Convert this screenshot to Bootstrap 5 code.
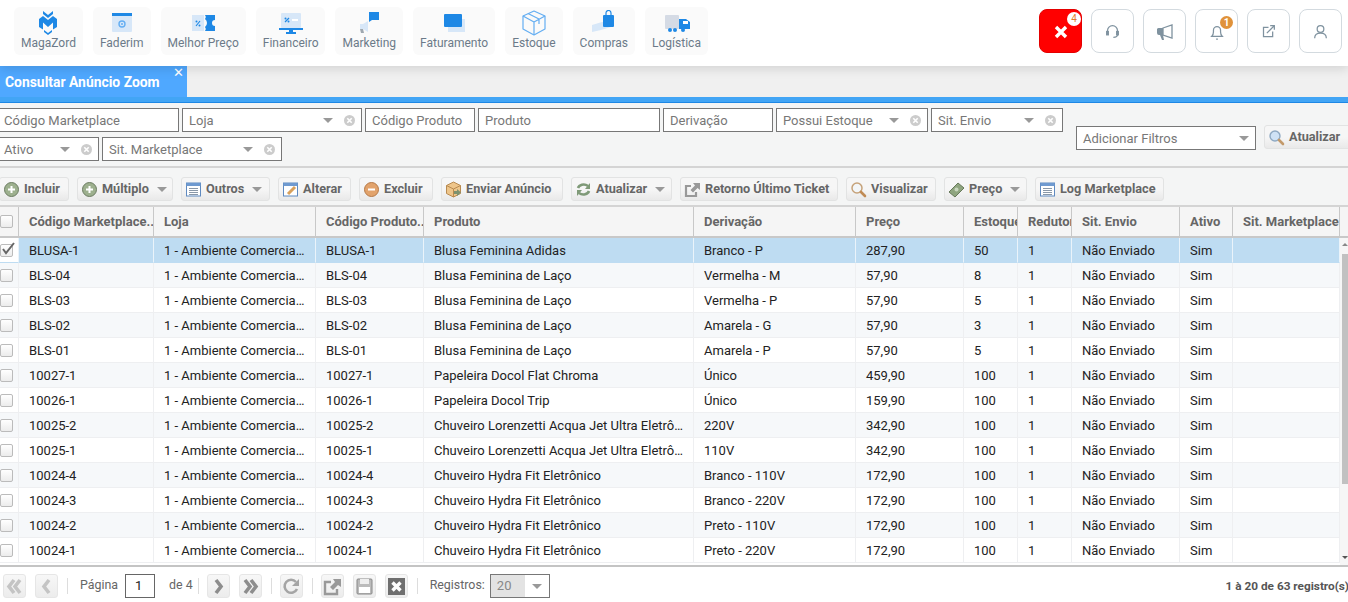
<!DOCTYPE html>
<html lang="pt-BR">
<head>
<meta charset="UTF-8">
<meta name="viewport" content="width=device-width, initial-scale=1.0">
<link href="https://cdn.jsdelivr.net/npm/bootstrap@5.3.0/dist/css/bootstrap.min.css" rel="stylesheet">
<script src="https://cdn.jsdelivr.net/npm/bootstrap@5.3.0/dist/js/bootstrap.bundle.min.js"></script>
<title>Consultar Anúncio Zoom</title>
<style>
html, body { height: 100%; overflow: hidden; }
body { font-family: Roboto, "Liberation Sans", sans-serif; font-size: 13px; background: #fff; color: #222; }

/* top menu */
.topbar { height: 66px; padding: 7px 6px 0 14px; position: relative; z-index: 2; box-shadow: 0 3px 10px rgba(0,0,0,.12); background: #fff; }
.mods { column-gap: 10px; }
.mod { height: 48px; background: #fafafa; border-radius: 6px; padding: 0 7px; color: #6c7a89; font-size: 12px; line-height: 14px; text-decoration: none; }
.mod svg { height: 26px; width: 30px; margin-top: 3px; }
.tools { column-gap: 9px; }
.tool { width: 43px; height: 44px; margin-top: 2px; background: #fff; border: 1px solid #d3dadf; border-radius: 8px; position: relative; padding: 0; }
.tool.alert-red { background: #f00; border-color: #e40000; }
.pip { position: absolute; top: 2px; right: 0; width: 14px; height: 14px; border-radius: 50%; background: #fff; color: #e57a2c; font-size: 10px; line-height: 14px; text-align: center; }
.pip.orange { background: #e0923a; color: #fff; font-weight: 700; width: 13px; height: 13px; line-height: 13px; top: 6px; right: 4px; }

/* tab strip */
.tabstrip { height: 31px; background: #f0f0f0; }
.tabsel { width: 187px; height: 31px; background: #4fa8ff; color: #fff; font-weight: 700; font-size: 13.9px; padding: 6px 0 0 5px; position: relative; }
.tabx { position: absolute; top: -1px; right: 3px; font-size: 13px; font-weight: 400; line-height: 16px; }
.band { height: 6px; background: #42a5f5; border-bottom: 1px solid #1e88e5; }

/* filters */
.filters { height: 65px; background: #f4f5f5; border-bottom: 2px solid #d4d4d4; }
.fwrap { width: 1070px; margin-left: -3px; padding-top: 5px; gap: 5px 3px; }
.fbox { height: 24px; background: #fff; border: 1px solid #777; color: #777; font-size: 13px; line-height: 22px; padding: 1px 6px 0; }
.fbox .caret { margin-left: auto; }
.caret { width: 0; height: 0; border-left: 5px solid transparent; border-right: 5px solid transparent; border-top: 5px solid #999; }
.clr { width: 11px; height: 11px; margin-left: 11px; flex: none; }
.w-a { width: 182px; padding-left: 6px; } .w-b { width: 180px; } .w-c { width: 110px; } .w-d { width: 182px; }
.w-e { width: 110px; } .w-f { width: 152px; } .w-g { width: 132px; } .w-h { width: 102px; padding-left: 6px; } .w-i { width: 180px; }
.addf { position: absolute; left: 1076px; top: 23px; width: 180px; }
.atual { position: absolute; left: 1264px; top: 22px; width: 100px; }

/* toolbar */
.actions { height: 39px; background: #f4f5f5; border-bottom: 2px solid #d4d4d4; padding: 9px 0 0 0; gap: 8px; margin-left: -1px; }
.act { height: 24px; padding: 0 6px 0 3px; border: 1px solid #e2e3e3; border-radius: 3px; font-size: 12.7px; font-weight: 700; color: #666; line-height: 22px; gap: 4px; background: linear-gradient(#f6f6f6 0, #f6f6f6 50%, #e9e9e9 100%); white-space: nowrap; }
.act svg { width: 17px; height: 17px; flex: none; }
.act .caret { margin-left: 4px; margin-right: 2px; }

/* grid */
.gridwrap { height: 360px; overflow: hidden; position: relative; background: #fff; border-bottom: 2px solid #c4c4c4; }
.gridtable { table-layout: fixed; width: 1340px; margin: 0; font-size: 13px; border-collapse: separate; border-spacing: 0; }
.gridtable th { height: 31px; padding: 0 0 0 10px; background: #f5f5f5; color: #666; font-weight: 700; white-space: nowrap; overflow: hidden; border-bottom: 2px solid #c8c8c8; border-right: 1px solid #c8c8c8; vertical-align: middle; }
.gridtable td { height: 25px; padding: 1px 10px 0; color: #222; white-space: nowrap; overflow: hidden; text-overflow: ellipsis; vertical-align: middle; background: #fff; border-bottom: 1px solid #eeeff1; border-right: 1px solid #eeeff1; box-shadow: none; }
.gridtable tbody tr:nth-child(even) td { background: #f6f8fa; }
.gridtable tbody tr.picked td { background: #bedcf2; border-right-color: #eaf3fa; border-bottom-color: #bedcf2; }
.gridtable tbody tr.picked td.cb { background: #fff; }
.gridtable .cb { padding: 0; }
.headfill { position: absolute; left: 1340px; top: 0; width: 8px; height: 31px; background: #f5f5f5; border-bottom: 2px solid #c8c8c8; }
.chk { display: block; width: 13px; height: 13px; margin-left: 0; border: 1px solid #bbb; border-radius: 2px; background: linear-gradient(#fff, #ececec); position: relative; }
.chk svg { position: absolute; left: -1px; top: -4px; width: 16px; height: 16px; }
.sbar { position: absolute; left: 1340px; top: 31px; bottom: 0; width: 8px; background: #f6f6f6; }
.sthumb { position: absolute; left: 2px; right: 0; top: 16px; height: 230px; background: #c1c1c1; }
.sup, .sdown { position: absolute; left: 2px; width: 0; height: 0; border-left: 3px solid transparent; border-right: 3px solid transparent; }
.sup { top: 5px; border-bottom: 3px solid #888; }
.sdown { bottom: 6px; border-top: 3px solid #555; }

/* pager */
.pager { height: 35px; padding: 7px 0 0 3px; background: #fff; color: #666; font-size: 12.4px; }
.pbtn { width: 23px; height: 24px; margin-right: 9px; padding: 0; border: 1px solid #e6e6e6; border-radius: 3px; background: linear-gradient(#f7f7f7, #ececec); flex: none; }
.pbtn svg { width: 21px; height: 21px; display: block; margin: 1px auto 0; }
.psep { width: 1px; height: 16px; background: #ddd; margin: 4px 8px 0 0; flex: none; }
.plabel { line-height: 22px; }
.pinput { width: 30px; height: 24px; border: 1px solid #666; background: #fff; color: #222; font-size: 13px; line-height: 22px; padding-left: 9px; margin: 0 14px 0 7px; flex: none; }
.psel { width: 60px; height: 24px; border: 1px solid #777; background: #e3e3e3; color: #888; line-height: 22px; padding-left: 6px; margin-left: 5px; position: relative; font-size: 13px; }
.psel .arrowbox { position: absolute; right: 0; top: 0; bottom: 0; width: 24px; background: #fff; padding: 9px 0 0 7px; }
.ptotal { position: absolute; right: -1px; top: 8px; font-weight: 700; font-size: 11.8px; color: #555; white-space: nowrap; line-height: 22px; }
</style>
</head>
<body>

<div class="topbar d-flex align-items-start">
  <div class="mods d-flex">
    <a class="mod d-flex flex-column align-items-center" href="#"><svg viewBox="0 0 30 26"><path fill="#1e88e5" d="M6 9l4-3 5 4 5-4 4 3v8l-4 2.500v-7l-5 4.500-5-4.500v7L6 17z"/><path fill="#1e88e5" d="M10 1l5 4 5-4v3l-5 4-5-4zM11 20l4 3 4-3v2l-4 3-4-3z"/></svg>MagaZord</a>
    <a class="mod d-flex flex-column align-items-center" href="#"><svg viewBox="0 0 30 26"><rect x="5" y="3" width="20" height="19" rx="1" fill="#d7e7f8"/><rect x="5" y="3" width="20" height="3" fill="#1e88e5"/><circle cx="15" cy="14" r="3" fill="none" stroke="#64aef2" stroke-width="1.4"/><circle cx="15" cy="14" r="1" fill="#64aef2"/></svg>Faderim</a>
    <a class="mod d-flex flex-column align-items-center" href="#"><svg viewBox="0 0 30 26"><path fill="#d7e7f8" d="M4 5h12v16H4z"/><path fill="#1e88e5" d="M17 5h10v5a3 3 0 0 0 0 6v5H17a3 3 0 0 0 0-4 5 5 0 0 0 0-8 3 3 0 0 0 0-4z"/><path stroke="#1e88e5" stroke-width="1.2" d="M8 16l4-5"/><circle cx="8.5" cy="11.5" r="1" fill="#1e88e5"/><circle cx="11.5" cy="15.5" r="1" fill="#1e88e5"/></svg>Melhor Preço</a>
    <a class="mod d-flex flex-column align-items-center" href="#"><svg viewBox="0 0 30 26"><rect x="5" y="3" width="20" height="15" rx="1" fill="#d7e7f8"/><rect x="3" y="18" width="24" height="2" fill="#1e88e5"/><path fill="#1e88e5" d="M13 20h4v2h3v2H10v-2h3z"/><path stroke="#1e88e5" stroke-width="1.2" d="M9 12l4-4"/><circle cx="9.5" cy="8.5" r="1" fill="#1e88e5"/><circle cx="12.5" cy="11.5" r="1" fill="#1e88e5"/><rect x="16" y="9" width="6" height="2" fill="#fff"/></svg>Financeiro</a>
    <a class="mod d-flex flex-column align-items-center" href="#"><svg viewBox="0 0 30 26"><path fill="#1e88e5" d="M15 2h10v8h-7l-3 2z"/><path fill="#d7e7f8" d="M9 14l5-3v11l-5-3H6v-5z"/><path fill="#9fa8b0" d="M6 19h3l1 4H7z"/></svg>Marketing</a>
    <a class="mod d-flex flex-column align-items-center" href="#"><svg viewBox="0 0 30 26"><rect x="9" y="9" width="17" height="13" fill="#d7e7f8"/><rect x="5" y="4" width="18" height="13" rx="1" fill="#1e88e5"/></svg>Faturamento</a>
    <a class="mod d-flex flex-column align-items-center" href="#"><svg viewBox="0 0 30 26"><g fill="none" stroke="#64aef2" stroke-width="1.2" stroke-linejoin="round"><path d="M15 1l11 5v13l-11 6-11-6V6z"/><path d="M4 6l11 6 11-6M15 12v13M9 3.5l11 5.500v5"/></g></svg>Estoque</a>
    <a class="mod d-flex flex-column align-items-center" href="#"><svg viewBox="0 0 30 26"><path fill="#d7e7f8" d="M3 15l10-3 9 1-6 3 6 1-10 3-9 2z"/><rect x="14" y="5" width="11" height="12" rx="1" fill="#1e88e5"/><path fill="none" stroke="#1e88e5" stroke-width="1.2" d="M17 5V3a2.5 2.5 0 0 1 5 0v2"/></svg>Compras</a>
    <a class="mod d-flex flex-column align-items-center" href="#"><svg viewBox="0 0 30 26"><rect x="3" y="5" width="14" height="14" rx="1" fill="#d5dbe5"/><path fill="#1e88e5" d="M17 9h7l4 3v7H17z"/><rect x="21" y="11" width="5" height="3" fill="#fff"/><circle cx="21" cy="20" r="2" fill="#1e88e5"/><circle cx="8" cy="20" r="2" fill="#1e88e5"/><circle cx="13" cy="20" r="2" fill="#1e88e5"/></svg>Logística</a>
  </div>
  <div class="tools d-flex ms-auto">
    <button class="tool alert-red" type="button"><svg width="14" height="14" viewBox="0 0 14 14"><path stroke="#fff" stroke-width="3.4" d="M2 2l10 10M12 2L2 12"/></svg><span class="pip">4</span></button>
    <button class="tool" type="button"><svg width="15" height="15" viewBox="0 0 18 18" fill="none" stroke="#7f929f" stroke-width="1.5"><path d="M3 10V8a6 6 0 0 1 12 0v2"/><rect x="2" y="9" width="2" height="4" fill="#7f929f"/><rect x="14" y="9" width="2" height="4" fill="#7f929f"/><path d="M15 13c0 2-2 3-5 3"/></svg></button>
    <button class="tool" type="button"><svg width="20" height="18" viewBox="0 0 20 18"><path fill="none" stroke="#7f929f" stroke-width="1.3" d="M8 5l9-3v13l-9-3z"/><path fill="#7f929f" d="M2 6a2 2 0 0 1 2-1h4v7H4a2 2 0 0 1-2-2zM5 12h3l1 5H7z"/></svg></button>
    <button class="tool" type="button"><svg width="16" height="18" viewBox="0 0 18 20" fill="none" stroke="#7f929f" stroke-width="1.4"><path d="M3 15c1-1 2-2 2-5V8a4 4 0 0 1 8 0v2c0 3 1 4 2 5z"/><path d="M8 18h2"/></svg><span class="pip orange">1</span></button>
    <button class="tool" type="button"><svg width="15" height="15" viewBox="0 0 18 18" fill="none" stroke="#7f929f" stroke-width="1.5"><path d="M9 4H3v11h11V9"/><path d="M7 11l9-9M11 2h5v5"/></svg></button>
    <button class="tool" type="button"><svg width="15" height="15" viewBox="0 0 18 18" fill="none" stroke="#7f929f" stroke-width="1.5"><circle cx="9" cy="6" r="4"/><path d="M2 17c0-4 3-6 7-6s7 2 7 6"/></svg></button>
  </div>
</div>

<div class="tabstrip">
  <div class="tabsel">Consultar Anúncio Zoom<span class="tabx">✕</span></div>
</div>
<div class="band"></div>

<div class="filters position-relative">
  <div class="fwrap d-flex flex-wrap" id="filters"></div>
  <div class="fbox addf d-flex align-items-center">Adicionar Filtros<span class="caret"></span></div>
  <div class="act atual d-flex align-items-center"><svg viewBox="0 0 17 17"><circle cx="7" cy="7" r="5" fill="#cfe2f5" stroke="#8fa9c2" stroke-width="1.4"/><path stroke="#c39a6b" stroke-width="2.6" stroke-linecap="round" d="M11 11l4 4"/></svg>Atualizar</div>
</div>

<div class="actions d-flex" id="actions"></div>

<div class="gridwrap">
  <table class="table gridtable">
    <colgroup>
      <col style="width:19px"><col style="width:135px"><col style="width:162px"><col style="width:108px"><col style="width:270px"><col style="width:162px"><col style="width:108px"><col style="width:54px"><col style="width:54px"><col style="width:108px"><col style="width:53px"><col style="width:107px">
    </colgroup>
    <thead>
      <tr>
        <th class="cb"><span class="chk"></span></th>
        <th>Código Marketplace...</th><th>Loja</th><th>Código Produto...</th><th>Produto</th><th>Derivação</th><th>Preço</th><th>Estoque</th><th>Redutor</th><th>Sit. Envio</th><th>Ativo</th><th>Sit. Marketplace</th>
      </tr>
    </thead>
    <tbody id="rows"></tbody>
  </table>
  <div class="headfill"></div>
  <div class="sbar"><div class="sup"></div><div class="sthumb"></div><div class="sdown"></div></div>
</div>

<div class="pager d-flex position-relative">
  <button class="pbtn" type="button"><svg viewBox="0 0 21 21"><path fill="none" stroke="#c4c4c4" stroke-width="3.6" d="M10 4l-5 6.5 5 6.5M16 4l-5 6.5 5 6.5"/></svg></button>
  <button class="pbtn" type="button"><svg viewBox="0 0 21 21"><path fill="none" stroke="#c4c4c4" stroke-width="3.6" d="M13 4l-5 6.5 5 6.5"/></svg></button>
  <span class="psep"></span>
  <span class="plabel ms-1">Página</span>
  <span class="pinput">1</span>
  <span class="plabel" style="margin-right:5px">de 4</span>
  <span class="psep"></span>
  <button class="pbtn" type="button"><svg viewBox="0 0 21 21"><path fill="none" stroke="#8d8d8d" stroke-width="3.6" d="M8 4l5 6.5-5 6.5"/></svg></button>
  <button class="pbtn" type="button"><svg viewBox="0 0 21 21"><path fill="none" stroke="#8d8d8d" stroke-width="3.6" d="M5 4l5 6.5-5 6.5M11 4l5 6.5-5 6.5"/></svg></button>
  <span class="psep"></span>
  <button class="pbtn" type="button"><svg viewBox="0 0 21 21"><path fill="none" stroke="#a5a5a5" stroke-width="2.6" d="M16 13a6.5 6.5 0 1 1-1-7"/><path fill="#a5a5a5" d="M18 3v7h-7z"/></svg></button>
  <span class="psep"></span>
  <button class="pbtn" type="button"><svg viewBox="0 0 21 21"><path fill="none" stroke="#999" stroke-width="2.4" d="M9 6H3v12h12v-5"/><path fill="#999" d="M11 3h8v8l-3-2-5 5-3-3 5-5z"/></svg></button>
  <button class="pbtn" type="button"><svg viewBox="0 0 21 21"><rect x="3" y="3" width="15" height="15" rx="1" fill="#bbb" stroke="#888"/><rect x="6" y="3" width="9" height="5" fill="#eee"/><rect x="5" y="11" width="11" height="6" fill="#fff"/></svg></button>
  <button class="pbtn" type="button"><svg viewBox="0 0 21 21"><rect x="2" y="2" width="17" height="17" fill="#6f6f6f"/><path stroke="#fff" stroke-width="3.4" d="M6.500 6.500l8 8M14.500 6.500l-8 8"/></svg></button>
  <span class="psep"></span>
  <span class="plabel" style="margin-left:4px">Registros:</span>
  <div class="psel">20<span class="arrowbox"><span class="caret d-block"></span></span></div>
  <div class="ptotal">1 à 20 de 63 registro(s)</div>
</div>

<script>
  const clearIcon = '<svg class="clr" viewBox="0 0 11 11"><circle cx="5.5" cy="5.5" r="5.5" fill="#ccc"/><path stroke="#fff" stroke-width="1.6" d="M3.3 3.3l4.4 4.4M7.7 3.3l-4.4 4.4"/></svg>';
  const filters = [
    ['Código Marketplace', 'w-a', 0], ['Loja', 'w-b', 1], ['Código Produto', 'w-c', 0], ['Produto', 'w-d', 0],
    ['Derivação', 'w-e', 0], ['Possui Estoque', 'w-f', 1], ['Sit. Envio', 'w-g', 1], ['Ativo', 'w-h', 1], ['Sit. Marketplace', 'w-i', 1]
  ];
  document.getElementById('filters').innerHTML = filters.map(f =>
    `<div class="fbox ${f[1]} d-flex align-items-center">${f[0]}${f[2] ? '<span class="caret"></span>' + clearIcon : ''}</div>`).join('');

  const icons = {
    plus: '<circle cx="8.5" cy="8.5" r="7" fill="#9db08e" stroke="#6d7d63"/><path stroke="#fff" stroke-width="2" d="M8.5 5v7M5 8.5h7"/>',
    list: '<rect x="1.5" y="2" width="14" height="13" fill="#fff" stroke="#5f8ac0"/><rect x="1.5" y="2" width="14" height="3" fill="#6f9ad0"/><path stroke="#8a98a8" d="M4 7.500h9M4 9.500h9M4 11.500h9M4 13.500h9"/>',
    edit: '<rect x="1.5" y="2" width="14" height="13" fill="#fff" stroke="#5f8ac0"/><rect x="1.5" y="2" width="14" height="3" fill="#6f9ad0"/><path stroke="#d9a15c" stroke-width="3" d="M6 13l7-7"/>',
    minus: '<circle cx="8.5" cy="8.5" r="7" fill="#e2a36c" stroke="#b67a48"/><rect x="5" y="7.5" width="7" height="2" fill="#fff"/>',
    box: '<path fill="#eec58a" stroke="#b88a50" d="M8.5 1l7 3.5v8l-7 3.5-7-3.5v-8z"/><path fill="none" stroke="#b88a50" d="M1.5 4.5l7 3.5 7-3.5M8.5 8v8"/><path fill="#7d9270" d="M9 10h3V8l4 3.5-4 3.5v-2H9z"/>',
    sync: '<path fill="none" stroke="#7f9a78" stroke-width="2.6" d="M3 7c1-3 6-5 10-2M14 10c-1 3-6 5-10 2"/><path fill="#7f9a78" d="M15 2v6h-5zM2 15V9h5z"/>',
    share: '<path fill="none" stroke="#999" stroke-width="2.2" d="M7 5H2v10h10v-4"/><path fill="#999" d="M9 2h7v7l-2.5-2-4.5 4.5-2.5-2.5L11 4.5z"/>',
    lens: '<circle cx="7" cy="7" r="5" fill="#f3f6f8" stroke="#c6a27a" stroke-width="1.5"/><path stroke="#c08b55" stroke-width="2.6" stroke-linecap="round" d="M11 11l4 4"/>',
    money: '<path fill="#8fa57f" stroke="#67795a" d="M1 11l9-9 6 5-9 9z"/><circle cx="8.5" cy="8.5" r="2" fill="#c8d6bd"/>'
  };
  const actions = [
    ['Incluir', 'plus', 0, 70], ['Múltiplo', 'plus', 1, 96], ['Outros', 'list', 1, 89], ['Alterar', 'edit', 0, 73], ['Excluir', 'minus', 0, 74],
    ['Enviar Anúncio', 'box', 0, 122], ['Atualizar', 'sync', 1, 101], ['Retorno Último Ticket', 'share', 0, 158], ['Visualizar', 'lens', 0, 90], ['Preço', 'money', 1, 83], ['Log Marketplace', 'list', 0, 129]
  ];
  document.getElementById('actions').innerHTML = actions.map(a =>
    `<div class="act d-flex align-items-center" style="width:${a[3]}px"><svg viewBox="0 0 17 17">${icons[a[1]]}</svg>${a[0]}${a[2] ? '<span class="caret"></span>' : ''}</div>`).join('');

  const store = '1 - Ambiente Comercial MagaZord';
  const rows = [
    ['BLUSA-1', 'Blusa Feminina Adidas', 'Branco - P', '287,90', '50'],
    ['BLS-04', 'Blusa Feminina de Laço', 'Vermelha - M', '57,90', '8'],
    ['BLS-03', 'Blusa Feminina de Laço', 'Vermelha - P', '57,90', '5'],
    ['BLS-02', 'Blusa Feminina de Laço', 'Amarela - G', '57,90', '3'],
    ['BLS-01', 'Blusa Feminina de Laço', 'Amarela - P', '57,90', '5'],
    ['10027-1', 'Papeleira Docol Flat Chroma', 'Único', '459,90', '100'],
    ['10026-1', 'Papeleira Docol Trip', 'Único', '159,90', '100'],
    ['10025-2', 'Chuveiro Lorenzetti Acqua Jet Ultra Eletrônico Cromado', '220V', '342,90', '100'],
    ['10025-1', 'Chuveiro Lorenzetti Acqua Jet Ultra Eletrônico Cromado', '110V', '342,90', '100'],
    ['10024-4', 'Chuveiro Hydra Fit Eletrônico', 'Branco - 110V', '172,90', '100'],
    ['10024-3', 'Chuveiro Hydra Fit Eletrônico', 'Branco - 220V', '172,90', '100'],
    ['10024-2', 'Chuveiro Hydra Fit Eletrônico', 'Preto - 110V', '172,90', '100'],
    ['10024-1', 'Chuveiro Hydra Fit Eletrônico', 'Preto - 220V', '172,90', '100']
  ];
  const tick = '<svg viewBox="0 0 16 16"><path fill="none" stroke="#666" stroke-width="2" d="M3 8l3 4 8-10"/></svg>';
  document.getElementById('rows').innerHTML = rows.map((r, i) =>
    `<tr class="${i === 0 ? 'picked' : ''}"><td class="cb"><span class="chk">${i === 0 ? tick : ''}</span></td>
     <td>${r[0]}</td><td>${store}</td><td>${r[0]}</td><td>${r[1]}</td><td>${r[2]}</td><td>${r[3]}</td><td>${r[4]}</td><td>1</td><td>Não Enviado</td><td>Sim</td><td></td></tr>`).join('');
</script>
</body>
</html>
